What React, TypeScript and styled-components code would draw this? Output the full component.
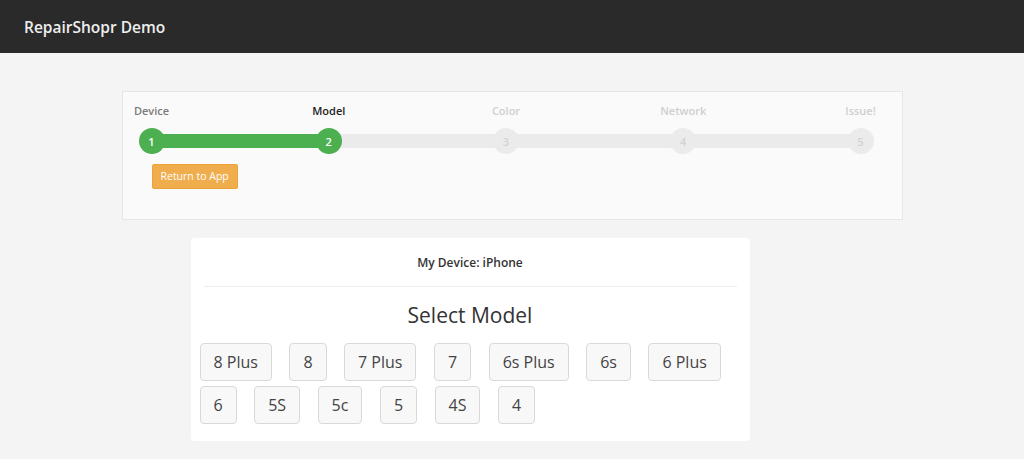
import React from "react";
import styled, { createGlobalStyle } from "styled-components";

const Global = createGlobalStyle`
  html, body { margin: 0; padding: 0; }
  body {
    background: #f4f4f4;
    font-family: "Open Sans", "DejaVu Sans", sans-serif;
    color: #333;
  }
  * { box-sizing: border-box; }
`;

const Header = styled.header`
  height: 53px;
  background: #2a2a2a;
  display: flex;
  align-items: center;
  padding-left: 24px;
`;

const Brand = styled.div`
  color: #eeeeee;
  font-size: 15.5px;
  font-weight: 600;
`;

const Main = styled.main`
  width: 781px;
  margin: 38px auto 0;
`;

const WizardPanel = styled.section`
  background: #fafafa;
  border: 1px solid #e6e6e6;
  padding: 11px 28px 30px 16px;
`;

const Steps = styled.div`
  position: relative;
  display: flex;
  justify-content: space-between;
  width: 735px;
`;

const Track = styled.div`
  position: absolute;
  left: 13px;
  right: 13px;
  bottom: 6px;
  height: 14px;
  background: #ebebeb;
`;

const TrackFill = styled.div`
  height: 100%;
  background: #4caf50;
`;

const Step = styled.div`
  position: relative;
  width: 26px;
  display: flex;
  flex-direction: column;
  align-items: center;
  gap: 10px;
`;

const StepLabel = styled.div<{ $state: "done" | "active" | "todo" }>`
  font-size: 11px;
  line-height: 15px;
  font-weight: 600;
  white-space: nowrap;
  color: ${(p) => (p.$state === "active" ? "#222" : p.$state === "done" ? "#7a7a7a" : "#cfcfcf")};
`;

const StepDot = styled.div<{ $on: boolean }>`
  width: 26px;
  height: 26px;
  border-radius: 50%;
  background: ${(p) => (p.$on ? "#4caf50" : "#ebebeb")};
  color: ${(p) => (p.$on ? "#ffffff" : "#d2d2d2")};
  font-size: 11px;
  font-weight: 600;
  display: flex;
  align-items: center;
  justify-content: center;
`;

const ReturnButton = styled.button`
  margin: 10px 0 0 13px;
  height: 25px;
  padding: 0 8px;
  background: #f0ad4e;
  border: 1px solid #eea236;
  border-radius: 2px;
  color: #fff;
  font-family: inherit;
  font-size: 10.5px;
  line-height: 15px;
  cursor: pointer;
`;

const Card = styled.section`
  margin: 18px 0 0 69px;
  width: 559px;
  background: #fff;
  border-radius: 4px;
  padding: 16px 0 17px;
`;

const CardHeader = styled.div`
  text-align: center;
  font-size: 12px;
  line-height: 17px;
  font-weight: 600;
  color: #333;
  padding-bottom: 15px;
  margin: 0 13px;
  border-bottom: 1px solid #eeeeee;
`;

const Title = styled.h2`
  margin: 14px 0 14px;
  text-align: center;
  font-size: 21px;
  line-height: 28px;
  font-weight: 400;
  color: #333;
`;

const ModelGrid = styled.div`
  display: flex;
  flex-wrap: wrap;
  column-gap: 17.5px;
  row-gap: 4.5px;
  padding: 0 9px;
`;

const ModelButton = styled.button`
  padding: 6px 13px;
  font-family: inherit;
  font-size: 16px;
  line-height: 24px;
  color: #444;
  background: #f8f8f8;
  border: 1px solid #d9d9d9;
  border-radius: 4px;
  cursor: pointer;
`;

const steps = ["Device", "Model", "Color", "Network", "Issue!"];
const current = 1;
const models = ["8 Plus", "8", "7 Plus", "7", "6s Plus", "6s", "6 Plus", "6", "5S", "5c", "5", "4S", "4"];

export default function App() {
  return (
    <>
      <Global />
      <Header>
        <Brand>RepairShopr Demo</Brand>
      </Header>
      <Main>
        <WizardPanel>
          <Steps>
            <Track>
              <TrackFill style={{ width: `${(current / (steps.length - 1)) * 100}%` }} />
            </Track>
            {steps.map((s, i) => (
              <Step key={s}>
                <StepLabel $state={i === current ? "active" : i < current ? "done" : "todo"}>{s}</StepLabel>
                <StepDot $on={i <= current}>{i + 1}</StepDot>
              </Step>
            ))}
          </Steps>
          <ReturnButton>Return to App</ReturnButton>
        </WizardPanel>
        <Card>
          <CardHeader>My Device: iPhone</CardHeader>
          <Title>Select Model</Title>
          <ModelGrid>
            {models.map((m) => (
              <ModelButton key={m}>{m}</ModelButton>
            ))}
          </ModelGrid>
        </Card>
      </Main>
    </>
  );
}
